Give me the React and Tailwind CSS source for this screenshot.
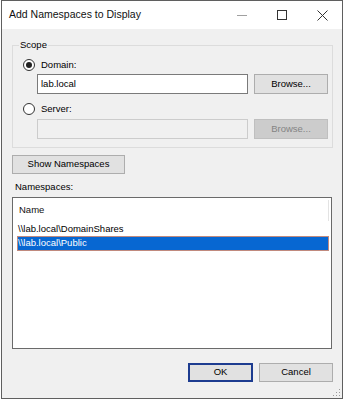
import React from 'react';

const FONT = { fontFamily: '"Liberation Sans", Arial, sans-serif' };

function Radio({ checked }) {
  return (
    <span className="flex h-[12px] w-[12px] shrink-0 items-center justify-center rounded-full border border-[#333333] bg-white">
      {checked && <span className="h-[6px] w-[6px] rounded-full bg-[#222222]" />}
    </span>
  );
}

function Button({ children, className = '', disabled = false }) {
  return (
    <div
      className={`flex h-[19px] items-center justify-center border text-[9.5px] ${
        disabled
          ? 'border-[#bfbfbf] bg-[#cccccc] text-[#848484]'
          : 'border-[#adadad] bg-[#e1e1e1] text-black'
      } ${className}`}
    >
      {children}
    </div>
  );
}

export default function App() {
  return (
    <div className="h-[400px] w-[345px] bg-white" style={FONT}>
      <div className="relative ml-[1px] flex h-[399px] w-[342px] flex-col border border-[#5f5f5f] bg-[#f0f0f0]">
        {/* Title bar */}
        <div className="flex h-[28px] items-center bg-white">
          <span className="ml-[7px] flex-1 text-[10.5px] text-[#111]">Add Namespaces to Display</span>
          <div className="flex h-full w-[40px] items-center justify-center">
            <svg width="10" height="10" viewBox="0 0 10 10">
              <line x1="0" y1="5.5" x2="10" y2="5.5" stroke="#a0a0a0" strokeWidth="1" />
            </svg>
          </div>
          <div className="flex h-full w-[40px] items-center justify-center">
            <svg width="10" height="10" viewBox="0 0 10 10">
              <rect x="0.5" y="0.5" width="9" height="9" fill="none" stroke="#333" strokeWidth="1" />
            </svg>
          </div>
          <div className="flex h-full w-[40px] items-center justify-center">
            <svg width="11" height="11" viewBox="0 0 11 11">
              <path d="M0.5 0.5 L10.5 10.5 M10.5 0.5 L0.5 10.5" stroke="#333" strokeWidth="1" />
            </svg>
          </div>
        </div>

        {/* Scope group */}
        <div className="ml-[10px] mt-[16px] w-[321px] border border-[#dcdcdc] pb-[8px] text-[9.5px] text-black">
          <div className="-mt-[7px] ml-[6px] w-fit bg-[#f0f0f0] px-[1px] leading-[12px]">Scope</div>

          <div className="ml-[10px] mt-[8px] flex h-[12px] items-center gap-[6px] leading-[12px]">
            <Radio checked />
            <span>Domain:</span>
          </div>
          <div className="ml-[24px] mt-[3px] flex gap-[6px]">
            <div className="flex h-[20px] w-[211px] items-center border border-[#7a7a7a] bg-white pl-[3px]">
              lab.local
            </div>
            <Button className="h-[20px] w-[74px]">Browse...</Button>
          </div>

          <div className="ml-[10px] mt-[9px] flex h-[12px] items-center gap-[6px] leading-[12px]">
            <Radio />
            <span>Server:</span>
          </div>
          <div className="ml-[24px] mt-[4px] flex gap-[6px]">
            <div className="h-[20px] w-[211px] border border-[#cccccc] bg-[#f0f0f0]" />
            <Button disabled className="h-[20px] w-[74px]">Browse...</Button>
          </div>
        </div>

        <Button className="ml-[10px] mt-[7px] w-[113px]">Show Namespaces</Button>

        <div className="ml-[13px] mt-[7px] text-[9.5px] leading-[12px] text-black">Namespaces:</div>

        {/* List */}
        <div className="ml-[10px] mt-[4px] flex h-[152px] w-[320px] flex-col border border-[#6a6a6a] bg-white text-[9.5px] text-black">
          <div className="flex h-[24px] items-center">
            <span className="ml-[6px] flex-1 font-medium text-[#111]">Name</span>
            <div className="mr-[2px] h-[21px] w-[1px] bg-[#e3e3e3]" />
          </div>
          <div className="ml-[4px] mr-[2px] flex h-[14px] items-center pl-[1px]">
            {'\\\\lab.local\\DomainShares'}
          </div>
          <div className="ml-[4px] mr-[2px] flex h-[15px] items-center border border-[#c08a7e] bg-[#0767d2] text-white">
            <span>{'\\\\lab.local\\Public'}</span>
          </div>
        </div>

        {/* Bottom buttons */}
        <div className="mr-[9px] mt-[14px] flex justify-end gap-[6px]">
          <Button className="w-[65px] border-2 !border-[#1d3c90]">OK</Button>
          <Button className="w-[74px]">Cancel</Button>
        </div>

        {/* Resize grip */}
        <svg className="absolute bottom-[1px] right-[1px]" width="8" height="8" viewBox="0 0 8 8">
          <rect x="6" y="0" width="1" height="1" fill="#9a9a9a" />
          <rect x="6" y="3" width="1" height="1" fill="#9a9a9a" />
          <rect x="3" y="3" width="1" height="1" fill="#9a9a9a" />
          <rect x="6" y="6" width="1" height="1" fill="#9a9a9a" />
          <rect x="3" y="6" width="1" height="1" fill="#9a9a9a" />
          <rect x="0" y="6" width="1" height="1" fill="#9a9a9a" />
        </svg>
      </div>
    </div>
  );
}
